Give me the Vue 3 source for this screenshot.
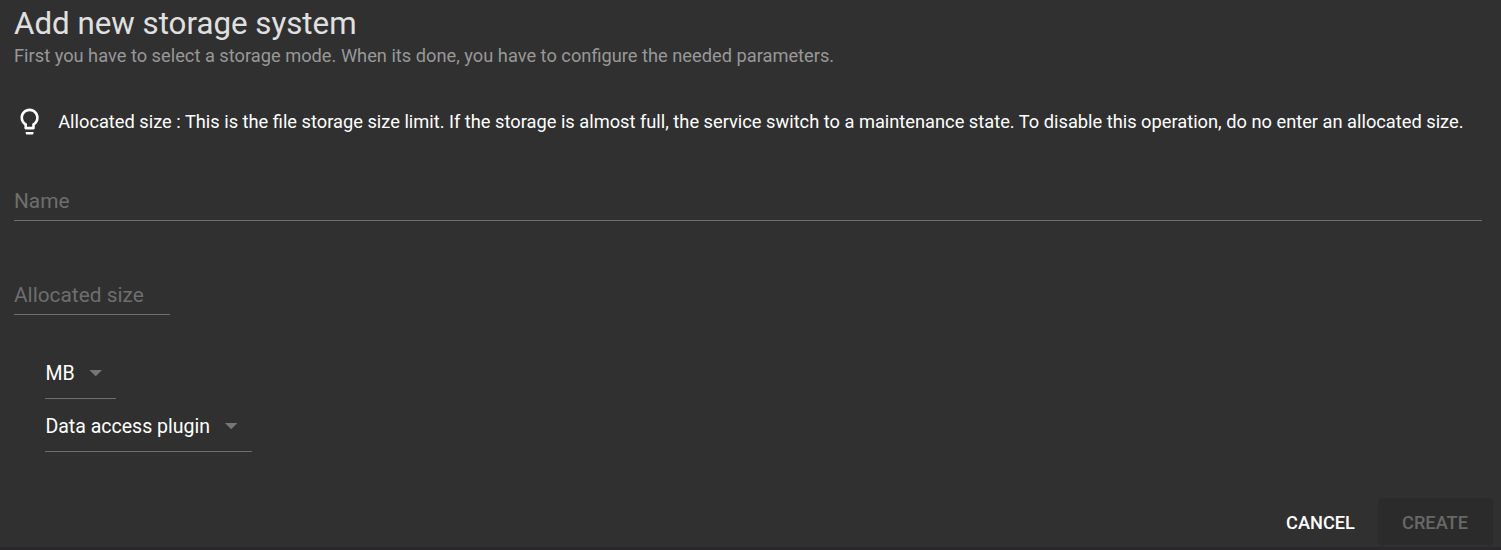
<script setup>
const units = 'MB'
const plugin = 'Data access plugin'
</script>

<template>
  <main class="dialog">
    <h1>Add new storage system</h1>
    <p class="sub">First you have to select a storage mode. When its done, you have to configure the needed parameters.</p>
    <div class="hint">
      <svg width="31.2" height="31.2" viewBox="0 0 24 24"><path fill="#fff" d="M9 21c0 .55.45 1 1 1h4c.55 0 1-.45 1-1v-1H9v1zm3-19C8.140 2 5 5.140 5 9c0 2.380 1.190 4.470 3 5.740V17c0 .55.45 1 1 1h6c.55 0 1-.45 1-1v-2.260c1.810-1.270 3-3.360 3-5.740 0-3.860-3.140-7-7-7zm2.850 11.100l-.85.6V16h-4v-2.300l-.85-.6C7.800 12.160 7 10.630 7 9c0-2.760 2.240-5 5-5s5 2.240 5 5c0 1.630-.8 3.160-2.150 4.100z"/></svg>
      <span>Allocated size : This is the file storage size limit. If the storage is almost full, the service switch to a maintenance state. To disable this operation, do no enter an allocated size.</span>
    </div>
    <div class="field name">Name</div>
    <div class="field size">Allocated size</div>
    <div class="select unit">{{ units }}<i></i></div>
    <div class="select plugin">{{ plugin }}<i></i></div>
    <footer>
      <button class="cancel">CANCEL</button>
      <button class="create" disabled>CREATE</button>
    </footer>
  </main>
</template>

<style>
body { background: #303030; }
</style>
<style scoped>
.dialog { box-sizing: border-box; height: 550px; padding: 0 8px 0 14px; background: #303030; border-bottom: 3px solid #2b272b; color: #fff; font-family: Roboto, sans-serif; display: flex; flex-direction: column; overflow: hidden; white-space: nowrap; }
h1 { margin: 4px 0 0; font-size: 31.28px; line-height: 40px; font-weight: 400; color: #e0e0e0; }
.sub { margin: 1px 0 0; font-size: 18.25px; line-height: 22px; color: #989898; }
.hint { display: flex; align-items: center; height: 32px; margin-top: 39px; font-size: 18.26px; line-height: 22px; }
.hint span { padding-bottom: 1px; }
.hint svg { flex: none; margin-right: 13px; }
.field { box-sizing: border-box; height: 40px; line-height: 40px; font-size: 20.85px; color: #6e6e6e; border-bottom: 1px solid #6e6e6e; }
.name { margin: 43px 11px 0 0; }
.size { width: 156px; margin-top: 54px; }
.select { box-sizing: border-box; display: flex; align-items: center; height: 53px; padding: 2px 0 0 0.4px; margin-left: 31px; font-size: 19.55px; border-bottom: 1px solid #6e6e6e; }
.select i { margin-left: 14.6px; width: 13px; height: 6.5px; background: #767676; clip-path: polygon(0 0, 100% 0, 50% 100%); }
.unit { width: 71px; margin-top: 31px; }
.plugin { width: 207px; }
footer { display: flex; justify-content: flex-end; margin-top: 46px; }
button { border: 0; padding: 0; height: 47px; font: 500 18.2px/22px Roboto, sans-serif; border-radius: 3px; }
.cancel { width: 116px; padding-top: 2px; padding-left: 1px; background: none; color: #fff; }
.create { width: 115px; padding-top: 2px; padding-right: 1px; background: #2b2b2b; color: #686868; }
</style>
